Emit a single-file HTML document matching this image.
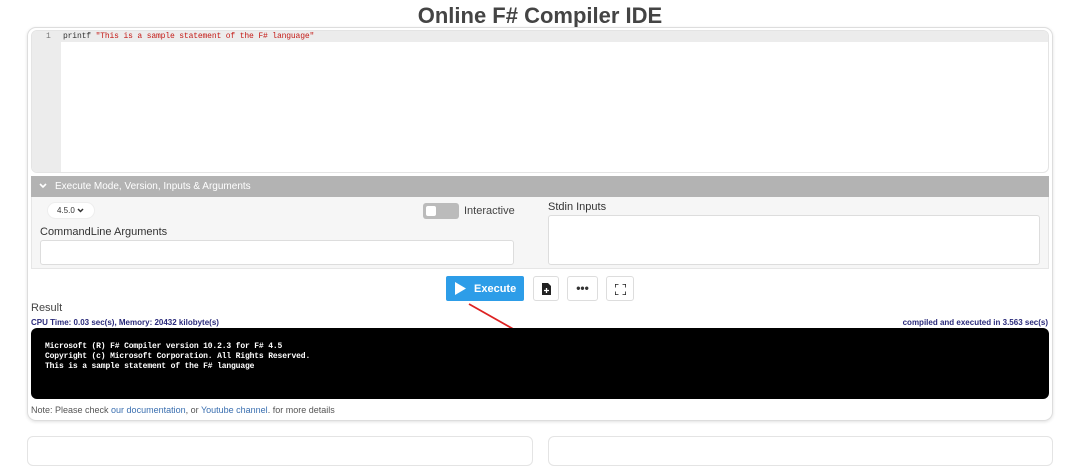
<!DOCTYPE html>
<html><head><style>
*{box-sizing:border-box;margin:0;padding:0}
body{width:1080px;height:452px;background:#fff;font-family:"Liberation Sans",sans-serif;position:relative;overflow:hidden;color:#333}
.abs{position:absolute}
.mono{font-family:"Liberation Mono",monospace}
</style></head><body>
<div class="abs" style="left:0;top:3px;width:1080px;text-align:center;font-size:22px;font-weight:bold;color:#444">Online F# Compiler IDE</div>
<div class="abs" style="left:27px;top:27px;width:1026px;height:394px;border:1px solid #ddd;border-radius:9px;box-shadow:0 1px 3px rgba(0,0,0,.12)"></div>
<div class="abs" style="left:31px;top:30px;width:1018px;height:143px;border:1px solid #e4e4e4;border-radius:6px;overflow:hidden;background:#fff">
 <div class="abs" style="left:0;top:0;width:29px;height:143px;background:#ececec"></div>
 <div class="abs" style="left:0;top:0;width:1018px;height:11px;background:#ececec"></div>
 <div class="abs mono" style="left:14px;top:0;font-size:8px;line-height:11px;color:#777">1</div>
 <div class="abs mono" style="left:31px;top:0;font-size:8px;line-height:11px;color:#333;letter-spacing:-0.15px">printf <span style="color:#c41a16">"This is a sample statement of the F# language"</span></div>
</div>
<div class="abs" style="left:31px;top:176px;width:1018px;height:21px;background:#b3b3b3;color:#fff;font-size:10px;line-height:21px;padding-left:24px">Execute Mode, Version, Inputs &amp; Arguments
 <svg class="abs" style="left:8px;top:7px" width="8" height="6"><path d="M1 1L4 4L7 1" stroke="#fff" stroke-width="1.6" fill="none"/></svg></div>
<div class="abs" style="left:31px;top:197px;width:1018px;height:72px;background:#f6f6f6;border:1px solid #e6e6e6;border-top:none"></div>
<div class="abs" style="left:47px;top:202px;width:48px;height:17px;background:#fff;border-radius:9px;border:1px solid #eee;font-size:8px;line-height:15px;padding-left:9px">4.5.0 <svg width="7" height="5"><path d="M1 1L3.5 3.5L6 1" stroke="#333" stroke-width="1.5" fill="none"/></svg></div>
<div class="abs" style="left:423px;top:203px;width:36px;height:16px;background:#bbb;border-radius:3px"><div style="margin:3px;width:10px;height:10px;background:#fff;border-radius:2px"></div></div>
<div class="abs" style="left:464px;top:205px;font-size:11px;color:#444">Interactive</div>
<div class="abs" style="left:40px;top:226px;font-size:11px;color:#333">CommandLine Arguments</div>
<div class="abs" style="left:40px;top:240px;width:474px;height:25px;background:#fff;border:1px solid #ddd;border-radius:3px"></div>
<div class="abs" style="left:548px;top:201px;font-size:11px;color:#333">Stdin Inputs</div>
<div class="abs" style="left:548px;top:215px;width:492px;height:50px;background:#fff;border:1px solid #ddd;border-radius:3px"></div>
<div class="abs" style="left:446px;top:276px;width:78px;height:25px;background:#2d9de8;border-radius:2px;color:#fff;font-size:11px;font-weight:bold;line-height:26px;padding-left:28px">Execute
 <svg class="abs" style="left:9px;top:6px" width="11" height="13"><path d="M0 0L11 6.5L0 13Z" fill="#fff"/></svg></div>
<div class="abs" style="left:533px;top:276px;width:26px;height:25px;border:1px solid #ddd;border-radius:3px"><svg style="margin:6px 0 0 8px" width="9" height="12"><path d="M0 0H6L9 3V12H0Z" fill="#222"/><path d="M4.5 5V10M2 7.5H7" stroke="#fff" stroke-width="1.3"/></svg></div>
<div class="abs" style="left:567px;top:276px;width:31px;height:25px;border:1px solid #ddd;border-radius:3px;text-align:center;font-size:12px;line-height:22px;font-weight:bold">•••</div>
<div class="abs" style="left:606px;top:276px;width:28px;height:25px;border:1px solid #ddd;border-radius:3px"><svg style="margin:7px 0 0 8px" width="11" height="11"><path d="M0 3.5V0H3.5M7.5 0H11V3.5M11 7.5V11H7.5M3.5 11H0V7.5" stroke="#222" stroke-width="1.6" fill="none"/></svg></div>
<svg class="abs" style="left:465px;top:300px" width="55" height="32"><path d="M4 4L50 30" stroke="#d22" stroke-width="1.8"/></svg>
<div class="abs" style="left:31px;top:302px;font-size:11px;color:#444">Result</div>
<div class="abs" style="left:31px;top:318px;font-size:8px;font-weight:bold;color:#2a2a7a">CPU Time: 0.03 sec(s), Memory: 20432 kilobyte(s)</div>
<div class="abs" style="right:32px;top:318px;font-size:8px;font-weight:bold;color:#2a2a7a">compiled and executed in 3.563 sec(s)</div>
<div class="abs mono" style="left:31px;top:328px;width:1018px;height:71px;background:#000;border-radius:6px;color:#fff;font-size:8px;font-weight:bold;line-height:10px;padding:14px 0 0 14px;letter-spacing:-0.15px">Microsoft (R) F# Compiler version 10.2.3 for F# 4.5<br>Copyright (c) Microsoft Corporation. All Rights Reserved.<br>This is a sample statement of the F# language</div>
<div class="abs" style="left:31px;top:405px;font-size:9px;color:#555">Note: Please check <span style="color:#3a6fb0">our documentation</span>, or <span style="color:#3a6fb0">Youtube channel</span>. for more details</div>
<div class="abs" style="left:27px;top:436px;width:506px;height:30px;border:1px solid #e4e4e4;border-radius:6px"></div>
<div class="abs" style="left:548px;top:436px;width:505px;height:30px;border:1px solid #e4e4e4;border-radius:6px"></div>
</body></html>
